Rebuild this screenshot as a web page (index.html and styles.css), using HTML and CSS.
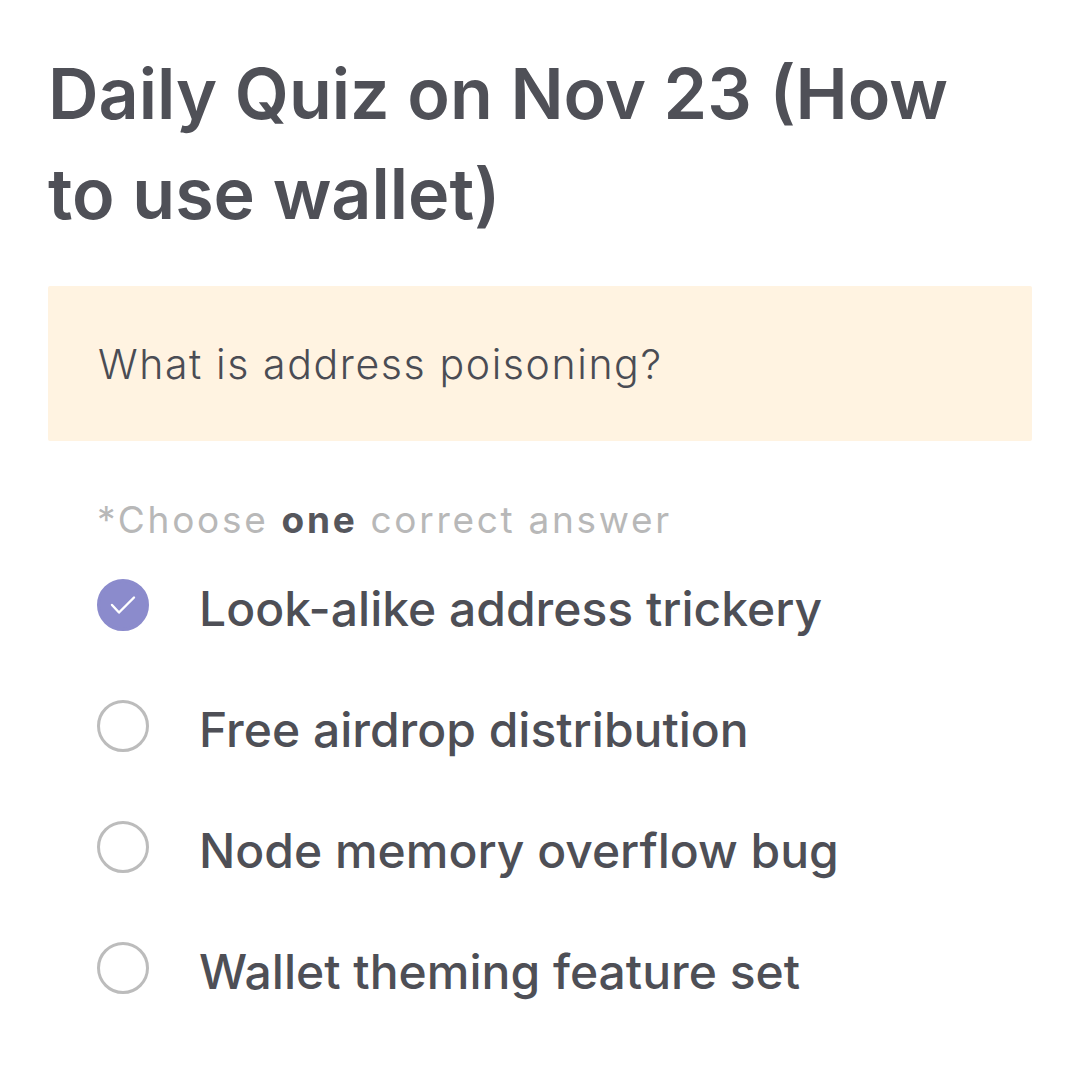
FILE: index.html
```html
<!DOCTYPE html>
<html lang="en">
<head>
    <meta charset="UTF-8">
    <meta name="viewport" content="width=device-width, initial-scale=1.0">
    <title>Daily Quiz</title>
    <link rel="stylesheet" href="styles.css">
</head>
<body>
    <div class="quiz">
        <h1 class="quiz-title">Daily Quiz on Nov 23 (How to use wallet)</h1>

        <div class="question-box">
            <p class="question">What is address poisoning?</p>
        </div>

        <p class="hint">*Choose <strong>one</strong> correct answer</p>

        <ul class="options">
            <li class="option selected">
                <span class="radio">
                    <svg viewBox="0 0 26 20" width="26" height="20">
                        <path d="M2 10l7 7.5L24 2.5" fill="none" stroke="#fff" stroke-width="2.4" stroke-linecap="round" stroke-linejoin="round"/>
                    </svg>
                </span>
                <span class="label">Look-alike address trickery</span>
            </li>
            <li class="option">
                <span class="radio"></span>
                <span class="label">Free airdrop distribution</span>
            </li>
            <li class="option">
                <span class="radio"></span>
                <span class="label">Node memory overflow bug</span>
            </li>
            <li class="option">
                <span class="radio"></span>
                <span class="label">Wallet theming feature set</span>
            </li>
        </ul>
    </div>
</body>
</html>
```

FILE: styles.css
```css
body {
    margin: 0;
    background: #fff;
    font-family: 'Inter', 'Noto Sans', sans-serif;
    color: #4e4f56;
}

.quiz {
    padding: 44px 48px 40px 48px;
}

.quiz-title {
    margin: 0;
    max-width: 920px;
    font-size: 70px;
    font-weight: 600;
    line-height: 100px;
    color: #4f5057;
}

.question-box {
    margin-top: 42px;
    height: 155px;
    background: #fff3e1;
    border-radius: 2px;
    display: flex;
    align-items: center;
    padding: 0 50px;
}

.question {
    margin: 0;
    font-size: 41px;
    font-weight: 300;
    letter-spacing: 1.6px;
    color: #4a4c54;
}

.hint {
    margin: 53px 0 0 49px;
    font-size: 37px;
    line-height: 52px;
    letter-spacing: 2.7px;
    color: #b8b8b8;
}

.hint strong {
    font-weight: 700;
    color: #55565c;
}

.options {
    list-style: none;
    margin: 29px 0 0 49px;
    padding: 0;
    display: flex;
    flex-direction: column;
    gap: 61px;
}

.option {
    display: flex;
    align-items: center;
    gap: 50px;
    height: 60px;
}

.radio {
    width: 46px;
    height: 46px;
    border: 3px solid #bcbcbc;
    border-radius: 50%;
    display: flex;
    align-items: center;
    justify-content: center;
    flex: none;
}

.selected .radio {
    background: #8b8bcc;
    border-color: #8b8bcc;
}

.label {
    font-size: 48px;
    font-weight: 500;
    color: #4e4f56;
    padding-top: 6px;
}
```
